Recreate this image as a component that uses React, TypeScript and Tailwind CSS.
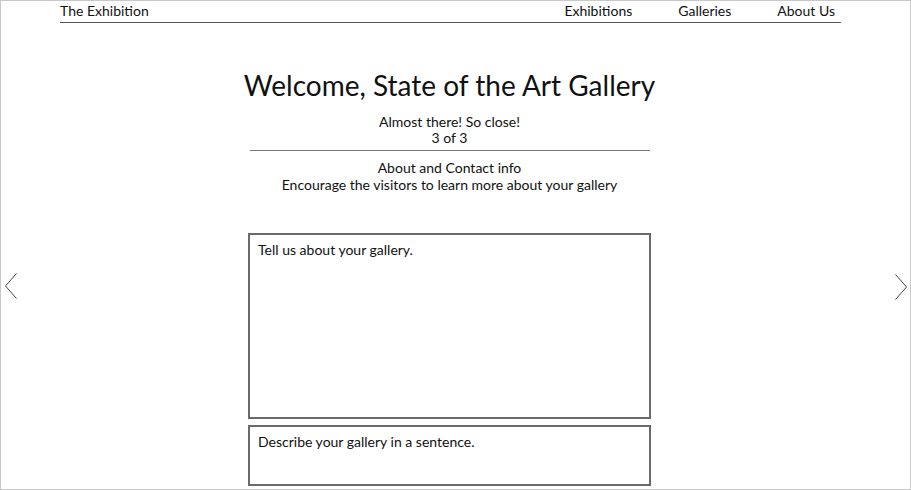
import React from "react";

const font = { fontFamily: "Lato, 'Noto Sans', sans-serif" };

function Chevron({ dir }: { dir: "left" | "right" }) {
  return (
    <svg width="14" height="28" viewBox="0 0 14 28" fill="none">
      {dir === "left" ? (
        <path d="M12.5 1.5 L1.5 14 L12.5 26.5" stroke="#444" strokeWidth="1" />
      ) : (
        <path d="M1.5 1.5 L12.5 14 L1.5 26.5" stroke="#444" strokeWidth="1" />
      )}
    </svg>
  );
}

export default function App() {
  return (
    <div
      className="relative w-[911px] h-[490px] overflow-hidden bg-white border border-[#c8c8c8] text-[#111]"
      style={font}
    >
      <header className="ml-[59px] mr-[69px] h-[22px] flex items-end justify-between border-b border-[#555] pb-[2px]">
        <span className="text-[14px] leading-[18px]">The Exhibition</span>
        <nav className="flex gap-[46px] pr-[6px] text-[14px] leading-[18px]">
          <span>Exhibitions</span>
          <span>Galleries</span>
          <span>About Us</span>
        </nav>
      </header>

      <main className="flex flex-col items-center pr-[12px]">
        <h1 className="mt-[42px] text-[28px] leading-[40px]">Welcome, State of the Art Gallery</h1>
        <p className="mt-[9px] text-[14px] leading-[16px] text-center">
          Almost there! So close!
          <br />
          3 of 3
        </p>
        <div className="mt-[4px] w-[400px] border-t border-[#777]" />
        <p className="mt-[8px] text-[14px] leading-[17px] text-center">
          About and Contact info
          <br />
          Encourage the visitors to learn more about your gallery
        </p>

        <div className="mt-[40px] w-[403px] h-[186px] border-2 border-[#6a6a6a] px-[8px] py-[6px] text-[14px] leading-[18px]">
          Tell us about your gallery.
        </div>
        <div className="mt-[6px] w-[403px] h-[61px] border-2 border-[#6a6a6a] px-[8px] py-[6px] text-[14px] leading-[18px]">
          Describe your gallery in a sentence.
        </div>
      </main>

      <div className="absolute left-[3px] top-[271px]">
        <Chevron dir="left" />
      </div>
      <div className="absolute right-[2px] top-[272px]">
        <Chevron dir="right" />
      </div>
    </div>
  );
}
